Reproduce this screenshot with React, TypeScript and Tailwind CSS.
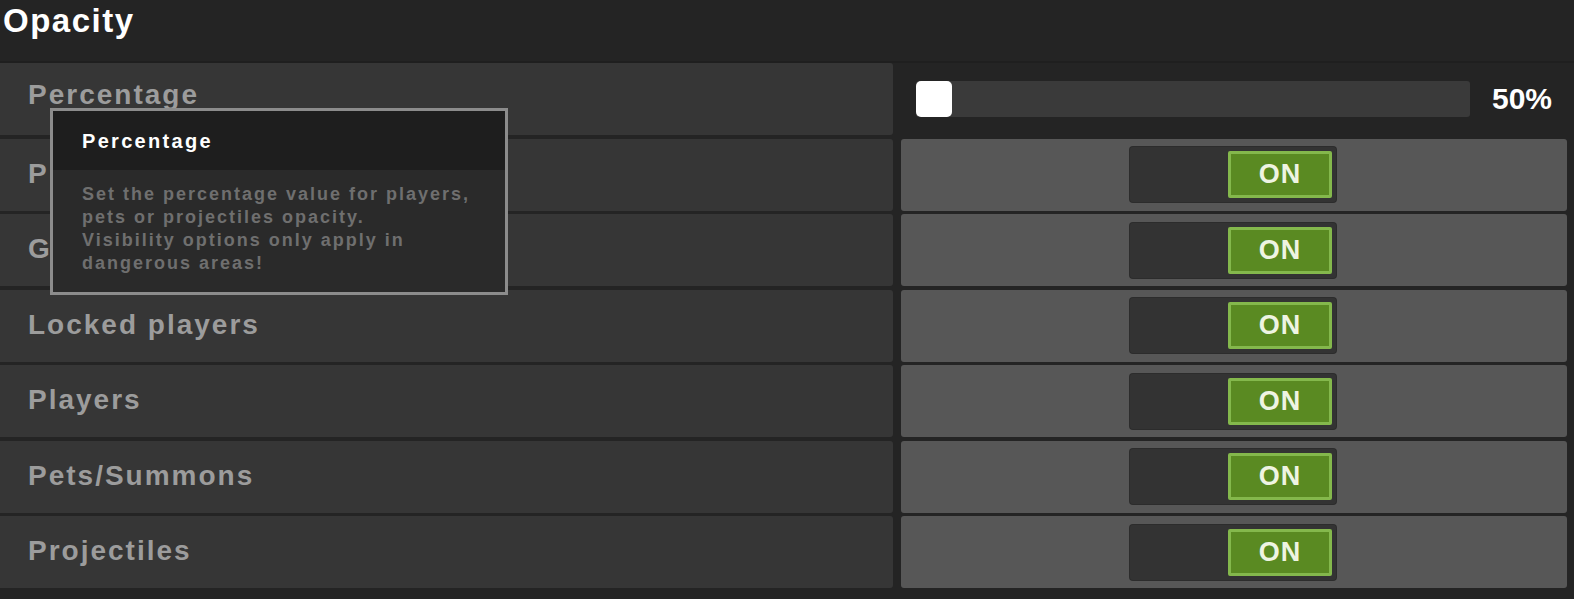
import React from 'react';

const FONT = { fontFamily: '"Liberation Sans", Arial, sans-serif' };

const rows = ['Players in party', 'Guild members', 'Locked players', 'Players', 'Pets/Summons', 'Projectiles'];

function Toggle() {
    return (
        <div className="flex h-[55px] w-[206px] rounded-[3px] bg-[#333333] p-[4px] pl-[98px] shadow-[0_0_0_1px_#2c2c2c]">
            <div className="flex flex-1 items-center justify-center rounded-[2px] border-[3px] border-[#84b84c] bg-[#5a8a22] text-[27px] font-bold leading-none tracking-[1px] text-[#eef4e2]">
                ON
            </div>
        </div>
    );
}

export default function App() {
    return (
        <div className="relative h-[599px] w-full overflow-hidden bg-[#242424]" style={FONT}>
            {/* header */}
            <div className="h-[63px] border-b-2 border-[#1f1f1f] pl-[3px] pt-[1px]">
                <span className="text-[33px] font-bold leading-[40px] tracking-[1.5px] text-white">Opacity</span>
            </div>

            <div className="flex flex-col gap-[3.5px] pr-[7px]">
                {/* percentage slider row */}
                <div className="flex h-[72px] gap-[8px]">
                    <div className="flex w-[893px] items-center rounded-r-[3px] bg-[#363636] pb-[8px] pl-[28px] text-[28px] font-bold tracking-[2px] text-[#9c9c9c]">
                        Percentage
                    </div>
                    <div className="flex flex-1 items-center pl-[15px]">
                        <div className="flex h-[36px] w-[554px] rounded-[3px] bg-[#3a3a3a]">
                            <div className="h-full w-[36px] rounded-[5px] bg-white" />
                        </div>
                        <span className="ml-[22px] text-[30px] font-bold leading-none text-white">50%</span>
                    </div>
                </div>

                {rows.map(label => (
                    <div key={label} className="flex h-[72px] gap-[8px]">
                        <div className="flex w-[893px] items-center rounded-r-[3px] bg-[#363636] pb-[2px] pl-[28px] text-[28px] font-bold tracking-[2px] text-[#9c9c9c]">
                            {label}
                        </div>
                        <div className="flex flex-1 items-center justify-center rounded-[3px] bg-[#575757] pr-[2px]">
                            <Toggle />
                        </div>
                    </div>
                ))}
            </div>

            {/* tooltip */}
            <div className="absolute left-[50px] top-[108px] flex h-[187px] w-[458px] flex-col border-[3px] border-[#8c8c8c] bg-[#2a2a2a]">
                <div className="flex h-[59px] items-center bg-[#1e1e1e] pl-[29px] text-[20px] font-bold tracking-[2.3px] text-white">
                    Percentage
                </div>
                <div className="pl-[29px] pt-[13px] text-[18px] font-bold leading-[23px] tracking-[2px] text-[#6f6f6f]">
                    <div>Set the percentage value for players,</div>
                    <div>pets or projectiles opacity.</div>
                    <div>Visibility options only apply in</div>
                    <div>dangerous areas!</div>
                </div>
            </div>
        </div>
    );
}
